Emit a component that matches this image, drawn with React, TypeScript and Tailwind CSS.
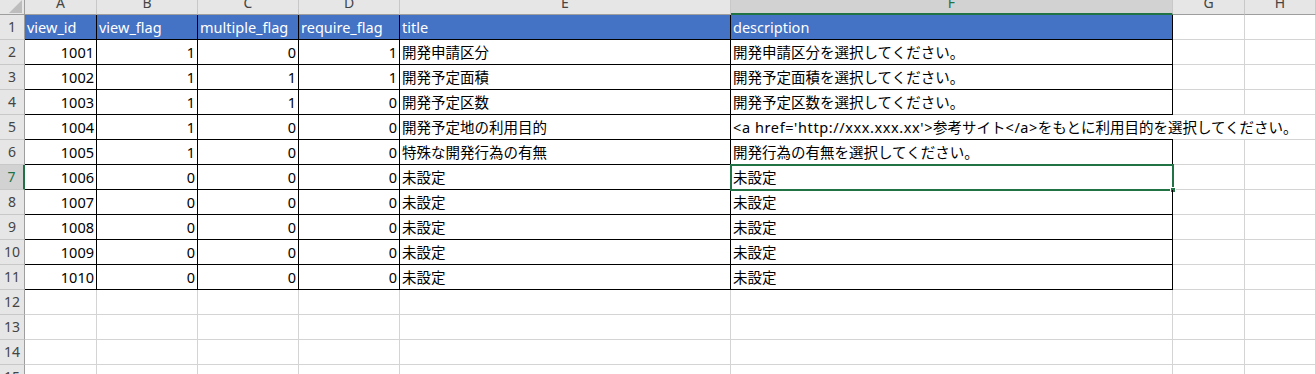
const COLS = ['A', 'B', 'C', 'D', 'E', 'F', 'G', 'H'];

const HEAD = ['view_id', 'view_flag', 'multiple_flag', 'require_flag', 'title', 'description'];

type Row = [number, number, number, number, string, React.ReactNode];

const ROWS: Row[] = [
  [1001, 1, 0, 1, '開発申請区分', '開発申請区分を選択してください。'],
  [1002, 1, 1, 1, '開発予定面積', '開発予定面積を選択してください。'],
  [1003, 1, 1, 0, '開発予定区数', '開発予定区数を選択してください。'],
  [
    1004, 1, 0, 0, '開発予定地の利用目的',
    <>
      <span className="tracking-[0.6px]">{"<a href='http://xxx.xxx.xx'>"}</span>
      {'参考サイト'}
      <span className="tracking-[0.5px]">{'</a>'}</span>
      {'をもとに利用目的を選択してください。'}
    </>,
  ],
  [1005, 1, 0, 0, '特殊な開発行為の有無', '開発行為の有無を選択してください。'],
  [1006, 0, 0, 0, '未設定', '未設定'],
  [1007, 0, 0, 0, '未設定', '未設定'],
  [1008, 0, 0, 0, '未設定', '未設定'],
  [1009, 0, 0, 0, '未設定', '未設定'],
  [1010, 0, 0, 0, '未設定', '未設定'],
];

function RowHead({ n }: { n: number }) {
  const selected = n === 7;
  return (
    <div
      className={
        selected
          ? 'h-[25px] bg-[#d2d2d2] border-r-2 border-r-[#217346] border-b border-b-[#c8c8c8] text-center leading-[24px] text-[14px] text-[#217346]'
          : 'h-[25px] bg-[#e6e6e6] border-r border-r-[#9e9e9e] border-b border-b-[#c8c8c8] text-center leading-[24px] text-[14px] text-[#444]'
      }
    >
      {n}
    </div>
  );
}

function EmptyCell({ noRight }: { noRight?: boolean }) {
  return (
    <div
      className={
        noRight
          ? 'h-[25px] border-b border-b-[#d4d4d4]'
          : 'h-[25px] border-r border-r-[#d4d4d4] border-b border-b-[#d4d4d4]'
      }
    />
  );
}

export default function App() {
  return (
    <div className="w-[1316px] h-[374px] overflow-hidden bg-white font-['Noto_Sans','Noto_Sans_CJK_JP',sans-serif] text-[14.5px] text-black">
      <div className="grid grid-cols-[25px_72px_101px_101px_101px_331px_442px_72px_71px]">
        {/* column headers */}
        <div className="h-[15px] bg-[#e6e6e6] border-r border-r-[#9e9e9e] border-b border-b-[#9e9e9e] flex justify-end items-end pr-[2px] pb-[1px]">
          <svg width="13" height="13" viewBox="0 0 13 13">
            <polygon points="13,0 13,13 0,13" fill="#bdbdbd" />
          </svg>
        </div>
        {COLS.map((c) => (
          <div
            key={c}
            className={
              c === 'F'
                ? 'h-[15px] overflow-hidden bg-[#d2d2d2] border-r border-r-[#c8c8c8] border-b-2 border-b-[#217346] flex justify-center text-[14px] leading-[15px] text-[#217346]'
                : 'h-[15px] overflow-hidden bg-[#e6e6e6] border-r border-r-[#c8c8c8] border-b border-b-[#9e9e9e] flex justify-center text-[14px] leading-[15px] text-[#444]'
            }
          >
            <span className="-mt-[5px]">{c}</span>
          </div>
        ))}

        {/* row 1: table header */}
        <RowHead n={1} />
        {HEAD.map((h) => (
          <div
            key={h}
            className="h-[25px] bg-[#4472c4] border-r border-r-black border-b border-b-black pl-[2px] leading-[24px] text-white whitespace-nowrap overflow-hidden"
          >
            {h}
          </div>
        ))}
        <EmptyCell />
        <EmptyCell />

        {/* data rows */}
        {ROWS.map((r, i) => {
          const n = i + 2;
          const overflow = n === 5;
          return [
            <RowHead key={`h${n}`} n={n} />,
            ...r.slice(0, 4).map((v, j) => (
              <div
                key={`${n}-${j}`}
                className="h-[25px] border-r border-r-black border-b border-b-black pr-[2px] text-right leading-[24px]"
              >
                {v as number}
              </div>
            )),
            <div
              key={`${n}-e`}
              className="h-[25px] border-r border-r-black border-b border-b-black pl-[2px] leading-[24px] whitespace-nowrap overflow-hidden"
            >
              {r[4]}
            </div>,
            <div
              key={`${n}-f`}
              className={
                overflow
                  ? 'relative z-10 h-[25px] border-b border-b-black pl-[2px] leading-[24px] whitespace-nowrap'
                  : 'relative h-[25px] border-r border-r-black border-b border-b-black pl-[2px] leading-[24px] whitespace-nowrap'
              }
            >
              {r[5]}
              {n === 7 && (
                <div className="pointer-events-none absolute -left-[1px] -top-[1px] -right-[2px] -bottom-[2px] border-2 border-[#217346]">
                  <div className="absolute -right-[4px] -bottom-[4px] w-[6px] h-[6px] bg-[#217346] border border-white" />
                </div>
              )}
            </div>,
            <EmptyCell key={`${n}-g`} noRight={overflow} />,
            <EmptyCell key={`${n}-h`} />,
          ];
        })}

        {/* empty rows */}
        {[12, 13, 14, 15].map((n) => [
          <RowHead key={`h${n}`} n={n} />,
          ...COLS.map((c) => <EmptyCell key={`${n}${c}`} />),
        ])}
      </div>
    </div>
  );
}
